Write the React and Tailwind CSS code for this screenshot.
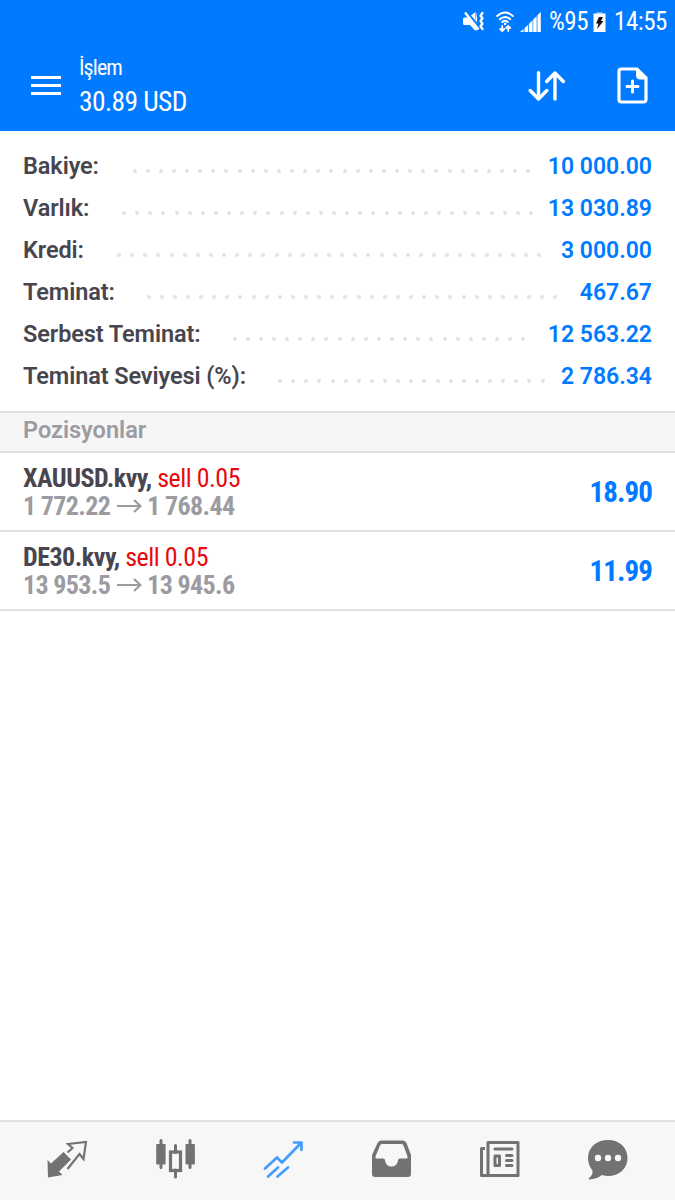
import React from "react";

const account = [
  { label: "Bakiye:", value: "10 000.00", dots: 31, labelWidth: "w-[109.5px]" },
  { label: "Varlık:", value: "13 030.89", dots: 32, labelWidth: "w-[99px]" },
  { label: "Kredi:", value: "3 000.00", dots: 33, labelWidth: "w-[94px]" },
  { label: "Teminat:", value: "467.67", dots: 32, labelWidth: "w-[123.5px]" },
  { label: "Serbest Teminat:", value: "12 563.22", dots: 23, labelWidth: "w-[209.5px]" },
  { label: "Teminat Seviyesi (%):", value: "2 786.34", dots: 21, labelWidth: "w-[255px]" },
];

const positions = [
  { symbol: "XAUUSD.kvy,", side: "sell 0.05", open: "1 772.22", current: "1 768.44", profit: "18.90" },
  { symbol: "DE30.kvy,", side: "sell 0.05", open: "13 953.5", current: "13 945.6", profit: "11.99" },
];

function StatusBar() {
  return (
    <div className="flex h-[43px] items-center justify-end pr-[8px] font-stretch-75% text-[25px]">
      <svg className="mr-[11px] shrink-0" width="22" height="22" viewBox="0 0 22 22" fill="none">
        <path d="M0 8q0-1.500 1.500-1.500H5l9 9V19l-2 .5L7 14H1.500Q0 14 0 12.500Z" fill="#fff" />
        <path d="M8 4.500L12.500 1v8.500zM14 1v10l-1.500-1z" fill="#fff" />
        <path d="M2 1.500l13.500 17" stroke="#fff" strokeWidth="2.400" />
        <path d="M19.500 2l-2 2.700 2 2.600-2 2.700 2 2.700-2 2.600 2 2.700" stroke="#fff" strokeWidth="2.300" strokeLinecap="round" strokeLinejoin="round" />
      </svg>
      <svg className="mr-[6px] shrink-0" width="18" height="22" viewBox="0 0 18 22" fill="none" stroke="#fff" strokeLinecap="round">
        <path d="M1.200 5Q9-2 16.800 5M3.800 8.200Q9 3.700 14.200 8.200M6.300 11Q9 8.700 11.700 11" strokeWidth="2" />
        <path d="M9 13h.1" strokeWidth="2.400" />
        <path d="M6.200 15v4.500M4.200 18l2 2 2-2M12.200 20v-4.500M10.200 17l2-2 2 2" strokeWidth="1.800" />
      </svg>
      <svg className="mr-[8px] shrink-0" width="21" height="20" viewBox="0 0 21 20" fill="#fff">
        <path d="M0 20l3.600-3v3zM4.600 16l3.600-3.200V20H4.600zM9 11.700l3.600-3.500V20H9zM13.200 7.500l3.500-3.300V20h-3.500zM17.400 3.200L20.800 0v20h-3.400z" />
      </svg>
      <span className="tracking-[-0.500px]">%95</span>
      <svg className="mr-[8px] ml-[5px] shrink-0" width="13" height="20" viewBox="0 0 13 20">
        <path d="M3.500 0h6v2h-6z" fill="#6ab2ff" />
        <path d="M.500 1.500h12V20H.500z" fill="#fff" />
        <path d="M6 5h4L8 9h2.500L4 17l1.500-5.500H3z" fill="#111" />
      </svg>
      <span className="tracking-[-0.450px]">14:55</span>
    </div>
  );
}

function Header() {
  return (
    <header className="h-[131px] bg-[#007aff] text-white">
      <StatusBar />
      <div className="flex h-[85px] items-center">
        <div className="ml-[31px] flex w-[30px] flex-col gap-[5px]">
          <span className="h-[3.300px] bg-white"></span>
          <span className="h-[3.300px] bg-white"></span>
          <span className="h-[3.300px] bg-white"></span>
        </div>
        <div className="-mt-[1px] ml-[18px] flex flex-1 flex-col font-stretch-75%">
          <span className="text-[22px] leading-[34px] tracking-[-0.900px]">İşlem</span>
          <span className="text-[27.500px] leading-[34px] tracking-[-0.600px]">30.89 USD</span>
        </div>
        <svg className="mr-[51px]" width="38" height="30" viewBox="0 0 38 30" fill="none" stroke="#fff" strokeWidth="3.400" strokeLinecap="round" strokeLinejoin="round">
          <path d="M10.500 1.800v26M2.200 19.500l8.300 8.500 8.300-8.500M27 28V2M18.700 10.500L27 2l8.300 8.500" />
        </svg>
        <svg className="mr-[27px]" width="31" height="37" viewBox="0 0 31 37" fill="none" stroke="#fff">
          <path d="M4.500 2h15.500l9 9v21.500q0 2.500-2.500 2.500h-22Q2 35 2 32.500v-28Q2 2 4.500 2Z" strokeWidth="3.200" />
          <path d="M19 1l11 11.500h-6.500Q19 12.500 19 8Z" fill="#fff" stroke="none" />
          <path d="M15.500 14v11M10 19.500h11" strokeWidth="3" strokeLinecap="round" />
        </svg>
      </div>
    </header>
  );
}

function AccountRow({ label, value, dots, labelWidth }) {
  return (
    <div className="flex h-[42px] items-center text-[23px] font-semibold">
      <span className={`${labelWidth} shrink-0 text-[23.500px] tracking-[-0.100px] whitespace-nowrap`}>{label}</span>
      <div className="mt-[7px] flex gap-[9.130px]">
        {Array.from({ length: dots }, (_, index) => (
          <span key={index} className="size-[4px] shrink-0 rounded-full bg-[#e3e3e3]"></span>
        ))}
      </div>
      <span className="ml-auto text-[#007aff]">{value}</span>
    </div>
  );
}

function Position({ symbol, side, open, current, profit }) {
  return (
    <div className="flex h-[79px] items-center justify-between border-b-2 border-[#e1e1e1] pr-[23px] pl-[23px] font-stretch-75%">
      <div className="flex flex-col text-[26px] leading-[28px]">
        <div className="tracking-[-0.500px]">
          <span className="font-bold">{symbol}</span> <span className="text-[#e8090d]">{side}</span>
        </div>
        <div className="flex items-center font-bold tracking-[-0.640px] text-[#9b9ba1]">
          <span>{open}</span>
          <svg className="mr-[5px] ml-[7px]" width="25" height="14" viewBox="0 0 25 14" fill="none" stroke="currentColor" strokeWidth="2.200">
            <path d="M0 7h23.500M17 1l6.500 6-6.500 6" />
          </svg>
          <span>{current}</span>
        </div>
      </div>
      <span className="pt-[2px] text-[29px] font-bold tracking-[-0.900px] text-[#007aff]">{profit}</span>
    </div>
  );
}

function BottomNav() {
  return (
    <nav className="grid h-[80px] grid-cols-[repeat(5,108px)_1fr] border-t-2 border-[#e1e1e1] bg-[#f7f7f7] text-[#727272]">
      <svg className="mt-[17px] ml-[47px]" width="41" height="40" viewBox="0 0 41 40" fill="none">
        <path d="M.500 21l3.500 3.500L16.500 13l7.500 7.500L12 32.500l3.500 3.500L1 38.500Z" fill="currentColor" />
        <path d="M20.500 13.500L25.500 9 21 5l18-2-2.500 17-4-5L20.500 30" stroke="currentColor" strokeWidth="2.200" />
      </svg>
      <svg className="mt-[16px] ml-[47px]" width="41" height="41" viewBox="0 0 41 41" fill="none" stroke="currentColor">
        <path d="M6 2.500v27M35 2.500v27M20.500 7.500v7M20.500 32v7" strokeWidth="3" strokeLinecap="round" />
        <rect x="1.200" y="6" width="9.400" height="20.500" rx="1" fill="currentColor" stroke="none" />
        <rect x="30.500" y="6" width="9.400" height="20.500" rx="1" fill="currentColor" stroke="none" />
        <rect x="15.500" y="14" width="10" height="18.500" strokeWidth="3.200" />
      </svg>
      <svg className="mt-[17px] ml-[47px] text-[#429dff]" width="41" height="40" viewBox="0 0 41 40" fill="none" stroke="currentColor" strokeWidth="2.700" strokeLinecap="round" strokeLinejoin="round">
        <path d="M2 29.500L14 18.500l5 5L38 4M31 3.500H38.500V11M5 37.500L15 28.500M14.500 37.500L25 28.500" />
        <path d="M33 3h6v6z" fill="currentColor" stroke="none" />
      </svg>
      <svg className="mt-[17px] ml-[47px]" width="42" height="40" viewBox="0 0 42 40">
        <path fillRule="evenodd" fill="currentColor" d="M10 1.500h22q2.500 0 3.500 2.500L40 16v19q0 3-3 3H4q-3 0-3-3V16L6.500 4Q7.500 1.500 10 1.500ZM11 5q-1.500 0-2 1.500L4.500 17.500q-.500 2 1 2H12q2 0 2 2 1 6 6.500 6t6.500-6q0-2 2-2h6.500q1.500 0 1-2L32.500 6.500q-.500-1.500-2-1.500Z" />
      </svg>
      <svg className="mt-[19px] ml-[48px]" width="40" height="37" viewBox="0 0 40 37" fill="none" stroke="currentColor" strokeWidth="3">
        <path d="M8 1.500h30v33H8ZM8 34.500H1.500v-27H5" strokeLinejoin="round" />
        <path d="M15 8h17M26.500 14.500H32M26.500 19.500H32M26.500 24.500H32" strokeLinecap="round" />
        <path d="M15 15h4.500v9.500H15z" strokeLinejoin="round" />
      </svg>
      <svg className="mt-[18px] ml-[47px]" width="42" height="41" viewBox="0 0 42 41">
        <path fill="currentColor" d="M21 0c11.500 0 19.500 7.500 19.500 18s-8 18-19.500 18q-3 0-6-1-5 4-13 4.500-1-.500 0-1.500 4-3 3.500-7.500Q1 25 1 18C1 7.500 9.500 0 21 0Z" />
        <g fill="#f7f7f7">
          <circle cx="11" cy="18" r="3.200" />
          <circle cx="21" cy="18" r="3.200" />
          <circle cx="31" cy="18" r="3.200" />
        </g>
      </svg>
    </nav>
  );
}

export default function App() {
  return (
    <div className="flex h-[1200px] w-[675px] flex-col overflow-hidden bg-white font-['Roboto',sans-serif] text-[#47464f]">
      <Header />
      <section className="h-[280px] px-[23px] pt-[15px]">
        {account.map((row) => (
          <AccountRow key={row.label} {...row} />
        ))}
      </section>
      <h2 className="flex h-[42px] items-center border-y-2 border-[#e1e1e1] bg-[#f6f6f6] px-[23px] pb-[3px] text-[23.500px] font-semibold text-[#9b9ba1]">
        Pozisyonlar
      </h2>
      <main className="flex-1">
        {positions.map((item) => (
          <Position key={item.symbol} {...item} />
        ))}
      </main>
      <BottomNav />
    </div>
  );
}
